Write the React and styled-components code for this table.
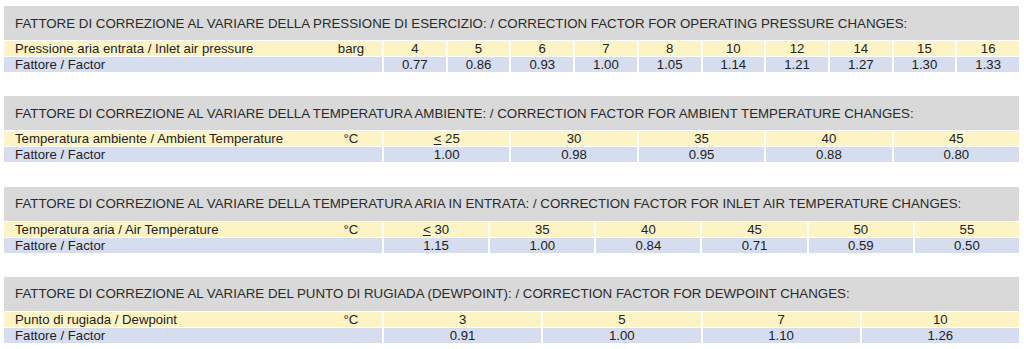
import React from 'react';
import styled, { createGlobalStyle } from 'styled-components';

const GlobalStyle = createGlobalStyle`
  html, body {
    margin: 0;
    padding: 0;
    background: #ffffff;
  }
  body {
    font-family: "Liberation Sans", Arial, sans-serif;
    color: #222222;
  }
`;

const sections = [
  {
    title: 'FATTORE DI CORREZIONE AL VARIARE DELLA PRESSIONE DI ESERCIZIO: / CORRECTION FACTOR FOR OPERATING PRESSURE CHANGES:',
    label: 'Pressione aria entrata / Inlet air pressure',
    unit: 'barg',
    values: ['4', '5', '6', '7', '8', '10', '12', '14', '15', '16'],
    factors: ['0.77', '0.86', '0.93', '1.00', '1.05', '1.14', '1.21', '1.27', '1.30', '1.33'],
  },
  {
    title: 'FATTORE DI CORREZIONE AL VARIARE DELLA TEMPERATURA AMBIENTE: / CORRECTION FACTOR FOR AMBIENT TEMPERATURE CHANGES:',
    label: 'Temperatura ambiente / Ambient Temperature',
    unit: '°C',
    values: ['<25', '30', '35', '40', '45'],
    factors: ['1.00', '0.98', '0.95', '0.88', '0.80'],
  },
  {
    title: 'FATTORE DI CORREZIONE AL VARIARE DELLA TEMPERATURA ARIA IN ENTRATA: / CORRECTION FACTOR FOR INLET AIR TEMPERATURE CHANGES:',
    label: 'Temperatura aria / Air Temperature',
    unit: '°C',
    values: ['<30', '35', '40', '45', '50', '55'],
    factors: ['1.15', '1.00', '0.84', '0.71', '0.59', '0.50'],
  },
  {
    title: 'FATTORE DI CORREZIONE AL VARIARE DEL PUNTO DI RUGIADA (DEWPOINT): / CORRECTION FACTOR FOR DEWPOINT CHANGES:',
    label: 'Punto di rugiada / Dewpoint',
    unit: '°C',
    values: ['3', '5', '7', '10'],
    factors: ['0.91', '1.00', '1.10', '1.26'],
  },
];

const Page = styled.div`
  width: 1015px;
  padding: 6px 0 0 4px;
  display: flex;
  flex-direction: column;
  gap: 24.3px;
`;

const Section = styled.section`
  display: flex;
  flex-direction: column;
  gap: 1px;
`;

const Header = styled.div`
  height: 34px;
  background: #d9d9d9;
  display: flex;
  align-items: center;
  padding-left: 11px;
  font-size: 13.3px;
  color: #2a2a2a;
  white-space: nowrap;
`;

const Table = styled.div`
  display: grid;
  grid-template-columns: 378px repeat(${p => p.cols}, 1fr);
  column-gap: 2px;
  row-gap: 1px;
`;

const Cell = styled.div`
  height: 15px;
  line-height: 15px;
  font-size: 13.2px;
  background: ${p => (p.tone === 'yellow' ? '#fdf4c6' : '#d5ddef')};
  text-align: center;
  white-space: nowrap;
`;

const LabelCell = styled(Cell)`
  display: flex;
  text-align: left;
  padding-left: 11px;
`;

const LabelText = styled.span`
  flex: 1;
`;

const Unit = styled.span`
  width: 62px;
  text-align: center;
`;

const Under = styled.span`
  text-decoration: underline;
`;

const renderValue = (v) => {
  if (v.startsWith('<')) {
    return (
      <>
        <Under>&lt;</Under> {v.slice(1)}
      </>
    );
  }
  return v;
};

const App = () => (
  <>
    <GlobalStyle />
    <Page>
      {sections.map(s => (
        <Section key={s.title}>
          <Header>{s.title}</Header>
          <Table cols={s.values.length}>
            <LabelCell tone="yellow">
              <LabelText>{s.label}</LabelText>
              <Unit>{s.unit}</Unit>
            </LabelCell>
            {s.values.map(v => (
              <Cell tone="yellow" key={v}>{renderValue(v)}</Cell>
            ))}
            <LabelCell tone="blue">
              <LabelText>Fattore / Factor</LabelText>
            </LabelCell>
            {s.factors.map((f, i) => (
              <Cell tone="blue" key={i}>{f}</Cell>
            ))}
          </Table>
        </Section>
      ))}
    </Page>
  </>
);

export default App;
